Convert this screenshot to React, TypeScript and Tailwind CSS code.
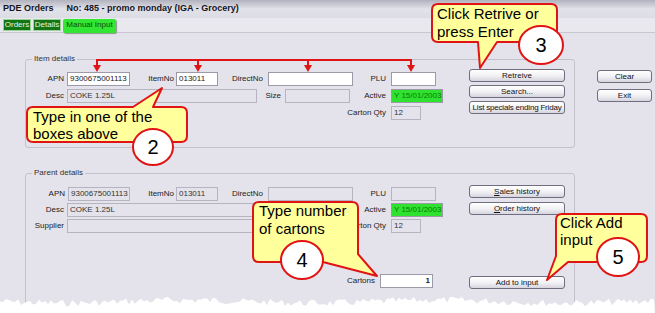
import React from 'react'

const RED = '#e01414'
const YELLOW = '#ffff9c'

function Box({ w, value = '', kind = 'white', right = false }: { w: number; value?: string; kind?: 'white' | 'grey' | 'green'; right?: boolean }) {
  const tone =
    kind === 'white'
      ? 'bg-white border-[#9c9aa8] text-[#222]'
      : kind === 'green'
      ? 'bg-[#2fe22f] border-[#9c9aa8] text-[#0a7a0a]'
      : 'bg-[#e4e2ea] border-[#b6b4c0] text-[#333]'
  return (
    <div
      style={{ width: w }}
      className={`h-[14px] shrink-0 border px-[2px] leading-[12px] whitespace-nowrap overflow-hidden ${tone} ${right ? 'text-right font-bold' : ''}`}
    >
      {value}
    </div>
  )
}

function Label({ w, text, pr = 3 }: { w: number; text: string; pr?: number }) {
  return (
    <div style={{ width: w, paddingRight: pr }} className="flex h-[14px] shrink-0 justify-end whitespace-nowrap leading-[14px] text-[#222]">
      {text}
    </div>
  )
}

function Btn({ w = 96, children }: { w?: number; children: React.ReactNode }) {
  return (
    <div
      style={{ width: w }}
      className="h-[13px] whitespace-nowrap rounded-[3px] border border-[#6f6e80] bg-gradient-to-b from-white via-[#f2f2f6] to-[#d6d5de] text-center leading-[11px] text-[#111]"
    >
      {children}
    </div>
  )
}

function Group({ title, className, children }: { title: string; className: string; children: React.ReactNode }) {
  return (
    <div className={`relative w-[550px] rounded-[3px] border border-[#c3c1cc] ${className}`}>
      <span className="absolute -top-[6px] left-[6px] bg-[#e4e2ea] px-[2px] leading-[10px] text-[#333]">{title}</span>
      {children}
    </div>
  )
}

function TornEdge() {
  let d = 'M0,313 L0,300 '
  let seed = 7
  for (let x = 0; x <= 655; x += 3) {
    seed = (seed * 9301 + 49297) % 233280
    const y = 298 + (seed / 233280) * 7 + Math.sin(x / 40) * 1.5
    d += `L${x},${y.toFixed(1)} `
  }
  d += 'L655,313 Z'
  return (
    <svg className="pointer-events-none absolute inset-0" width={655} height={313}>
      <path d={d} fill="#ffffff" />
    </svg>
  )
}

function Annotations() {
  const arrows = [97, 198, 308, 411]
  return (
    <>
      <svg className="pointer-events-none absolute inset-0" width={655} height={313}>
        <g stroke={RED} strokeWidth={2} fill="none">
          <path d="M97,66 L97,60 L411,60 L411,66" />
          <path d="M198,60 L198,66 M308,60 L308,66" />
        </g>
        {arrows.map((x) => (
          <polygon key={x} points={`${x - 4},65 ${x + 4},65 ${x},72`} fill={RED} />
        ))}
        <g fill={YELLOW} stroke={RED} strokeWidth={2} strokeLinejoin="round">
          <path d="M33,107 L133,107 L162,88 L153,107 L181,107 Q187,107 187,113 L187,136 Q187,142 181,142 L33,142 Q27,142 27,136 L27,113 Q27,107 33,107 Z" />
          <path d="M438,4 L551,4 Q557,4 557,10 L557,36 Q557,42 551,42 L497,42 L480,68 L478,42 L438,42 Q432,42 432,36 L432,10 Q432,4 438,4 Z" />
          <path d="M259,202 L352,202 Q358,202 358,208 L358,254 L377,276 L323,262 L259,262 Q253,262 253,256 L253,208 Q253,202 259,202 Z" />
          <path d="M562,214 L641,214 Q647,214 647,220 L647,256 Q647,262 641,262 L568,262 L547,280 L556,256 L556,220 Q556,214 562,214 Z" />
        </g>
        <g fill="#ffffff" stroke={RED} strokeWidth={2}>
          <ellipse cx={153} cy={147} rx={20} ry={18} />
          <ellipse cx={541} cy={45} rx={22} ry={19} />
          <ellipse cx={302} cy={260} rx={21} ry={19} />
          <ellipse cx={618} cy={257} rx={21} ry={19} />
        </g>
      </svg>
      <div className="absolute left-[33px] top-[108px] text-[15px] leading-[17px] text-black">
        Type in one of the
        <br />
        boxes above
      </div>
      <div className="absolute left-[437px] top-[5px] text-[15px] leading-[18px] text-black">
        Click Retrive or
        <br />
        press Enter
      </div>
      <div className="absolute left-[259px] top-[202px] text-[15px] leading-[18px] text-black">
        Type number
        <br />
        of cartons
      </div>
      <div className="absolute left-[560px] top-[214px] text-[15px] leading-[17px] text-black">
        Click Add
        <br />
        input
      </div>
      {[
        { n: '2', x: 153, y: 147 },
        { n: '3', x: 541, y: 45 },
        { n: '4', x: 302, y: 260 },
        { n: '5', x: 618, y: 257 },
      ].map((c) => (
        <div
          key={c.n}
          style={{ left: c.x - 15, top: c.y - 12 }}
          className="absolute w-[30px] text-center text-[20px] leading-[24px] text-black"
        >
          {c.n}
        </div>
      ))}
    </>
  )
}

export default function App() {
  return (
    <div className="relative h-[313px] w-[655px] overflow-hidden bg-[#e4e2ea] font-['Liberation_Sans',Arial,sans-serif] text-[8px]">
      {/* title */}
      <div className="flex h-[18px] items-center gap-[13px] bg-gradient-to-b from-[#b2b2be] via-[#e2e2ea] to-[#dcdce4] px-[3px] text-[9px] font-bold text-[#141420]">
        <span>PDE Orders</span>
        <span>No: 485 - promo monday (IGA - Grocery)</span>
      </div>

      {/* tabs */}
      <div className="flex h-[15px] items-start gap-[2px] border-b border-[#c8c6d0] bg-[#e8e8ee] px-[3px] pt-[1px]">
        <div className="h-[12px] w-[28px] border border-[#9ad29a] bg-[#137513] text-center leading-[10px] text-[#e6f6e6]">Orders</div>
        <div className="h-[12px] w-[28px] border border-[#9ad29a] bg-[#137513] text-center leading-[10px] text-[#e6f6e6]">Details</div>
        <div className="h-[14px] w-[53px] rounded-[2px] bg-[#33e633] text-center leading-[11px] text-[#0d4d0d] shadow-[1px_1px_1px_#8a9a8a]">
          Manual Input
        </div>
      </div>

      {/* body */}
      <div className="flex pl-[25px] pt-[26px]">
        <div className="flex flex-col">
          <Group title="Item details" className="flex h-[89px]">
            <div className="flex w-[443px] flex-col gap-[3px] pt-[12px]">
              <div className="flex">
                <Label w={41} text="APN" />
                <Box w={63} value="9300675001113" />
                <Label w={46} text="ItemNo" pr={2} />
                <Box w={42} value="013011" />
                <Label w={50} text="DirectNo" pr={5} />
                <Box w={85} />
                <Label w={38} text="PLU" pr={5} />
                <Box w={45} />
              </div>
              <div className="flex">
                <Label w={41} text="Desc" />
                <Box w={190} value="COKE 1.25L" kind="grey" />
                <Label w={28} text="Size" pr={4} />
                <Box w={65} kind="grey" />
                <Label w={41} text="Active" pr={5} />
                <Box w={52} value="Y 15/01/2003" kind="green" />
              </div>
              <div className="flex">
                <Label w={365} text="Carton Qty" pr={5} />
                <Box w={30} value="12" kind="grey" />
              </div>
            </div>
            <div className="flex flex-col gap-[3px] pt-[9px]">
              <Btn>Retreive</Btn>
              <Btn>Search...</Btn>
              <Btn>
                <span className="tracking-[-0.2px]">List specials ending Friday</span>
              </Btn>
            </div>
          </Group>

          <Group title="Parent details" className="mt-[25px] flex h-[140px]">
            <div className="flex w-[443px] flex-col pt-[13px]">
              <div className="flex flex-col gap-[2px]">
                <div className="flex">
                  <Label w={42} text="APN" />
                  <Box w={62} value="9300675001113" kind="grey" />
                  <Label w={46} text="ItemNo" pr={2} />
                  <Box w={42} value="013011" kind="grey" />
                  <Label w={50} text="DirectNo" pr={5} />
                  <Box w={85} kind="grey" />
                  <Label w={38} text="PLU" pr={5} />
                  <Box w={45} kind="grey" />
                </div>
                <div className="flex">
                  <Label w={41} text="Desc" />
                  <Box w={286} value="COKE 1.25L" kind="grey" />
                  <Label w={38} text="Active" pr={5} />
                  <Box w={52} value="Y 15/01/2003" kind="green" />
                </div>
                <div className="flex">
                  <Label w={41} text="Supplier" />
                  <Box w={286} kind="grey" />
                  <Label w={38} text="Carton Qty" pr={5} />
                  <Box w={30} value="12" kind="grey" />
                </div>
              </div>
              <div className="mt-[41px] flex">
                <Label w={354} text="Cartons" pr={5} />
                <Box w={53} value="1" right />
              </div>
            </div>
            <div className="flex flex-col pt-[11px]">
              <div className="flex flex-col gap-[4px]">
                <Btn>
                  <span className="underline">S</span>ales history
                </Btn>
                <Btn>
                  <span className="underline">O</span>rder history
                </Btn>
              </div>
              <div className="mt-[61px]">
                <Btn>Add to input</Btn>
              </div>
            </div>
          </Group>
        </div>

        <div className="ml-[22px] flex flex-col gap-[6px] pt-[11px]">
          <Btn w={55}>Clear</Btn>
          <Btn w={55}>Exit</Btn>
        </div>
      </div>

      <TornEdge />
      <Annotations />
    </div>
  )
}
